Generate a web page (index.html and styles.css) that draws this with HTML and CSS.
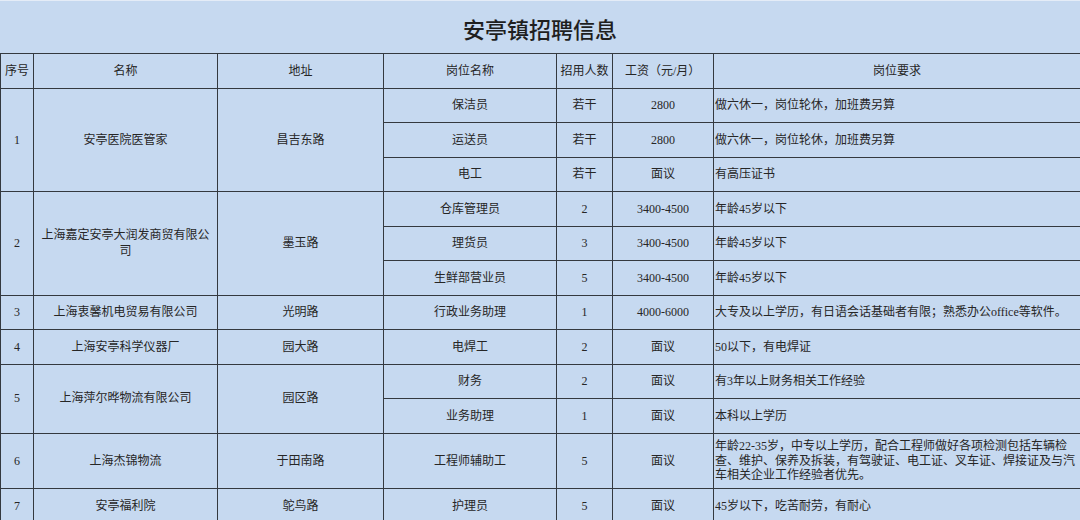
FILE: index.html
```html
<!DOCTYPE html>
<html lang="zh">
<head>
<meta charset="utf-8">
<title>安亭镇招聘信息</title>
<link rel="stylesheet" href="styles.css">
</head>
<body>
<div class="sheet">
  <div class="title">安亭镇招聘信息</div>
  <table class="jobs">
    <colgroup>
      <col class="c-no"><col class="c-name"><col class="c-addr"><col class="c-pos"><col class="c-num"><col class="c-pay"><col class="c-req">
    </colgroup>
    <thead>
      <tr><th>序号</th><th>名称</th><th>地址</th><th>岗位名称</th><th>招用人数</th><th class="pay-h">工资（元/月）</th><th>岗位要求</th></tr>
    </thead>
    <tbody>
      <tr><td rowspan="3">1</td><td rowspan="3">安亭医院医管家</td><td rowspan="3">昌吉东路</td><td>保洁员</td><td>若干</td><td>2800</td><td class="req">做六休一，岗位轮休，加班费另算</td></tr>
      <tr><td>运送员</td><td>若干</td><td>2800</td><td class="req">做六休一，岗位轮休，加班费另算</td></tr>
      <tr><td>电工</td><td>若干</td><td>面议</td><td class="req">有高压证书</td></tr>
      <tr><td rowspan="3">2</td><td rowspan="3" class="wrap">上海嘉定安亭大润发商贸有限公司</td><td rowspan="3">墨玉路</td><td>仓库管理员</td><td>2</td><td>3400-4500</td><td class="req">年龄45岁以下</td></tr>
      <tr><td>理货员</td><td>3</td><td>3400-4500</td><td class="req">年龄45岁以下</td></tr>
      <tr><td>生鲜部营业员</td><td>5</td><td>3400-4500</td><td class="req">年龄45岁以下</td></tr>
      <tr><td>3</td><td>上海衷馨机电贸易有限公司</td><td>光明路</td><td>行政业务助理</td><td>1</td><td>4000-6000</td><td class="req">大专及以上学历，有日语会话基础者有限；熟悉办公office等软件。</td></tr>
      <tr><td>4</td><td>上海安亭科学仪器厂</td><td>园大路</td><td>电焊工</td><td>2</td><td>面议</td><td class="req">50以下，有电焊证</td></tr>
      <tr><td rowspan="2">5</td><td rowspan="2">上海萍尔晔物流有限公司</td><td rowspan="2">园区路</td><td>财务</td><td>2</td><td>面议</td><td class="req">有3年以上财务相关工作经验</td></tr>
      <tr><td>业务助理</td><td>1</td><td>面议</td><td class="req">本科以上学历</td></tr>
      <tr class="tall"><td>6</td><td>上海杰锦物流</td><td>于田南路</td><td>工程师辅助工</td><td>5</td><td>面议</td><td class="req multi">年龄22-35岁，中专以上学历，配合工程师做好各项检测包括车辆检<br>查、维护、保养及拆装，有驾驶证、电工证、叉车证、焊接证及与汽<br>车相关企业工作经验者优先。</td></tr>
      <tr><td>7</td><td>安亭福利院</td><td>鸵鸟路</td><td>护理员</td><td>5</td><td>面议</td><td class="req">45岁以下，吃苦耐劳，有耐心</td></tr>
    </tbody>
  </table>
</div>
</body>
</html>
```

FILE: styles.css
```css
html, body {
  margin: 0;
  padding: 0;
  background: #c6d9f0;
}

.sheet {
  width: 1080px;
  height: 520px;
  overflow: hidden;
  background: #c6d9f0;
  font-family: "Liberation Serif", "Noto Sans CJK SC", serif;
  color: #262626;
}

.title {
  height: 53px;
  border-top: 1px solid #e4ecf7;
  display: flex;
  align-items: center;
  justify-content: center;
  padding-top: 2px;
  box-sizing: border-box;
  font-family: "Noto Sans CJK SC", sans-serif;
  font-weight: 500;
  font-size: 22px;
  color: #1f1f1f;
  letter-spacing: 0;
}

.jobs {
  width: 1080px;
  table-layout: fixed;
  border-collapse: collapse;
  font-size: 12px;
  line-height: 14.5px;
}

.c-no { width: 33px; }
.c-name { width: 184px; }
.c-addr { width: 166px; }
.c-pos { width: 173px; }
.c-num { width: 56px; }
.c-pay { width: 101px; }
.c-req { width: 367px; }

.jobs th,
.jobs td {
  border: 1px solid #34393f;
  padding: 0;
  text-align: center;
  vertical-align: middle;
  font-weight: normal;
  height: 33.5px;
}

.jobs th.pay-h {
  text-align: left;
  padding-left: 12px;
}

.jobs td.wrap {
  padding: 0 4px;
  line-height: 16px;
}

.jobs td.req {
  text-align: left;
  padding-left: 1px;
}

.jobs tr.tall td {
  height: 50.5px;
}

.jobs td.multi {
  line-height: 14.5px;
  padding-top: 2px;
  padding-bottom: 2px;
}
```
